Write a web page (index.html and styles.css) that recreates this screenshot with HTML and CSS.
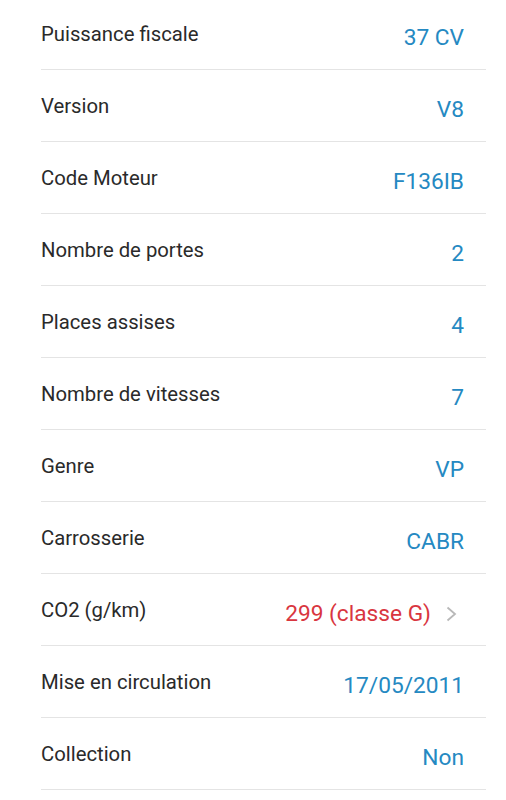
FILE: index.html
```html
<!DOCTYPE html>
<html lang="fr">
<head>
<meta charset="utf-8">
<link rel="stylesheet" href="styles.css">
</head>
<body>
<div class="list">
  <div class="row"><span class="label">Puissance fiscale</span><span class="value">37 CV</span></div>
  <div class="row"><span class="label">Version</span><span class="value">V8</span></div>
  <div class="row"><span class="label">Code Moteur</span><span class="value">F136IB</span></div>
  <div class="row"><span class="label">Nombre de portes</span><span class="value">2</span></div>
  <div class="row"><span class="label">Places assises</span><span class="value">4</span></div>
  <div class="row"><span class="label">Nombre de vitesses</span><span class="value">7</span></div>
  <div class="row"><span class="label">Genre</span><span class="value">VP</span></div>
  <div class="row"><span class="label">Carrosserie</span><span class="value">CABR</span></div>
  <div class="row"><span class="label">CO2 (g/km)</span><span class="value value-alert">299 (classe G)<svg class="chev" width="11" height="16" viewBox="0 0 11 16"><path d="M1.5 1.5 L9 8 L1.5 14.5" fill="none" stroke="#b8b8b8" stroke-width="1.8"/></svg></span></div>
  <div class="row"><span class="label">Mise en circulation</span><span class="value">17/05/2011</span></div>
  <div class="row"><span class="label">Collection</span><span class="value">Non</span></div>
</div>
</body>
</html>
```
FILE: styles.css
```css
html, body {
  margin: 0;
  padding: 0;
  background: #ffffff;
}
body {
  font-family: Roboto, "Noto Sans", sans-serif;
}
.list {
  margin: -2px 20px 0 41px;
}
.row {
  box-sizing: border-box;
  height: 72px;
  border-bottom: 1px solid #e4e4e4;
  display: flex;
  justify-content: space-between;
  align-items: flex-start;
  padding-right: 22px;
}
.label {
  padding-top: 24px;
  font-size: 20.3px;
  font-weight: 400;
  line-height: 24px;
  color: #2a2a2a;
}
.value {
  padding-top: 26px;
  font-size: 22.7px;
  font-weight: 400;
  line-height: 28px;
  color: #2589c2;
  display: flex;
  align-items: center;
}
.value-alert {
  color: #d9363f;
}
.chev {
  margin-left: 15px;
  margin-right: 7px;
  margin-top: 0;
}
```
